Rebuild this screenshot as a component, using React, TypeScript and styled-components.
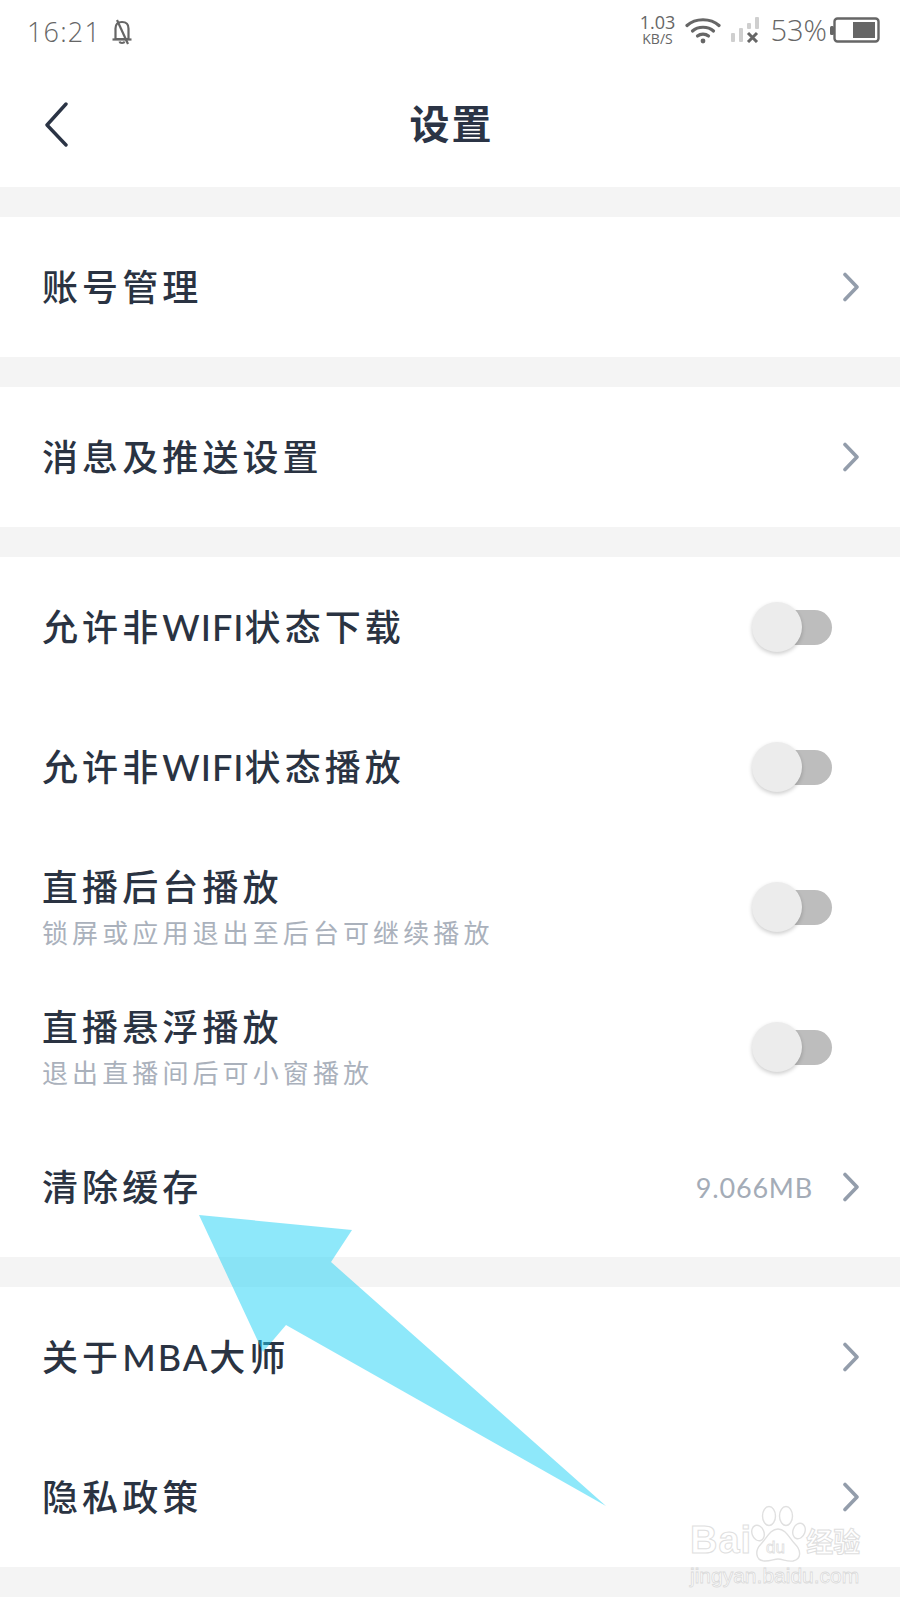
import React from "react";
import styled, { createGlobalStyle } from "styled-components";

const Global = createGlobalStyle`
  html, body { margin: 0; padding: 0; background: #fff; }
  body { font-family: "Lato", "Noto Sans CJK SC", sans-serif; }
`;

const CJK = `"Lato", "Noto Sans CJK SC", sans-serif`;

const Screen = styled.div`
  position: relative;
  width: 900px;
  height: 1600px;
  overflow: hidden;
  background: #fff;
`;

const StatusBar = styled.div`
  height: 64px;
  display: flex;
  align-items: flex-start;
  justify-content: space-between;
  padding: 14px 20px 0 27px;
  box-sizing: border-box;
  color: #777;
`;
const StatusLeft = styled.div`
  display: flex;
  align-items: center;
  gap: 10px;
  height: 36px;
`;
const Clock = styled.span`
  font-family: "Open Sans", sans-serif;
  font-size: 27px;
  font-weight: 300;
  letter-spacing: 1.2px;
  line-height: 36px;
  color: #666;
`;
const StatusRight = styled.div`
  display: flex;
  align-items: center;
  height: 32px;
`;
const Speed = styled.div`
  display: flex;
  flex-direction: column;
  align-items: center;
  width: 40px;
  margin-right: 8px;
  font-family: "Open Sans", sans-serif;
  color: #666;
`;
const SpeedValue = styled.span`
  font-size: 18px;
  line-height: 18px;
`;
const SpeedUnit = styled.span`
  font-size: 14px;
  line-height: 16px;
`;
const SignalGap = styled.span`
  width: 10px;
`;
const Percent = styled.span`
  font-family: "Open Sans", sans-serif;
  font-size: 29px;
  font-weight: 300;
  color: #666;
  margin: 0 3px 0 11px;
  line-height: 32px;
`;

const Header = styled.div`
  height: 123px;
  box-sizing: border-box;
  padding: 0 0 8px 3px;
  display: flex;
  align-items: center;
  justify-content: center;
  position: relative;
`;
const BackIcon = styled.svg`
  position: absolute;
  left: 42px;
  top: 37px;
`;
const Title = styled.h1`
  margin: 0;
  font-family: ${CJK};
  font-size: 40px;
  font-weight: 700;
  letter-spacing: 2px;
  color: #2b3445;
`;

const Band = styled.div`
  height: 30px;
  background: #f4f4f4;
`;

const Row = styled.div`
  height: 140px;
  display: flex;
  align-items: center;
  justify-content: space-between;
  padding: 0 41px 0 42px;
  box-sizing: border-box;
`;
const Texts = styled.div`
  display: flex;
  flex-direction: column;
`;
const Label = styled.div`
  font-family: ${CJK};
  font-size: 36px;
  font-weight: 500;
  line-height: 46px;
  letter-spacing: 4.1px;
  color: #2a3342;
`;
const Latin = styled.span<{ $spacing: number }>`
  letter-spacing: ${(p) => p.$spacing}px;
`;
const Sub = styled.div`
  font-family: ${CJK};
  font-size: 26px;
  line-height: 34px;
  letter-spacing: 4.1px;
  color: #aab1bc;
  margin-top: 6px;
`;
const Trailing = styled.div`
  display: flex;
  align-items: center;
  gap: 30px;
`;
const Value = styled.span`
  font-family: "Lato", sans-serif;
  font-size: 27px;
  letter-spacing: 0.8px;
  color: #a4acb7;
`;
const Track = styled.div`
  position: relative;
  width: 68px;
  height: 35px;
  border-radius: 18px;
  background: #bdbdbd;
  margin-right: 27px;
`;
const Knob = styled.div`
  position: absolute;
  left: -12px;
  top: -8px;
  width: 50px;
  height: 50px;
  border-radius: 50%;
  background: #ececec;
  box-shadow: 0 2px 4px rgba(0, 0, 0, 0.2);
`;

const ArrowOverlay = styled.svg`
  position: absolute;
  left: 0;
  top: 0;
  pointer-events: none;
`;

const Watermark = styled.div`
  position: absolute;
  left: 690px;
  top: 1506px;
  width: 180px;
  pointer-events: none;
`;
const MarkTop = styled.div`
  display: flex;
  align-items: flex-end;
  height: 56px;
  white-space: nowrap;
`;
const MarkBai = styled.span`
  font-family: "Liberation Sans", sans-serif;
  font-size: 38px;
  line-height: 44px;
  font-weight: 700;
  color: #fff;
  -webkit-text-stroke: 1px #e0e0e0;
  letter-spacing: 1px;
`;
const MarkPaw = styled.svg`
  flex: none;
  margin: -6px 0 -2px -2px;
`;
const MarkCn = styled.span`
  font-family: "Noto Sans CJK SC", sans-serif;
  font-size: 27px;
  line-height: 42px;
  font-weight: 700;
  color: #fff;
  -webkit-text-stroke: 1px #dedede;
  margin-left: 0;
  flex: none;
`;
const MarkUrl = styled.div`
  font-family: "Liberation Sans", sans-serif;
  font-size: 21px;
  line-height: 24px;
  color: #fff;
  -webkit-text-stroke: 0.8px #dadada;
  margin-top: 2px;
  white-space: nowrap;
`;

const Chevron = () => (
  <svg width="16" height="32" viewBox="0 0 16 32" fill="none">
    <path d="M2 3.500 L14 16 L2 28.500" stroke="#939dab" strokeWidth="3.600" strokeLinecap="round" strokeLinejoin="round" />
  </svg>
);

const Toggle = () => (
  <Track>
    <Knob />
  </Track>
);

const BellOff = () => (
  <svg width="22" height="26" viewBox="0 0 22 26" fill="none" stroke="#666" strokeWidth="2.200" strokeLinejoin="round">
    <path d="M4.500 20 V9.500 C4.500 5.500 7 3 11 3 C15 3 17.500 5.500 17.500 9.500 V20 Z" />
    <path d="M1.500 20.500 H20.500" />
    <path d="M8.500 22.500 C9 24.500 13 24.500 13.500 22.500" />
    <path d="M6 1 L17 25" />
  </svg>
);

const Wifi = () => (
  <svg width="36" height="27" viewBox="0 0 36 27" fill="none" stroke="#666" strokeWidth="3.200" strokeLinecap="round">
    <path d="M2 8.500 C10.500 0.800 25.500 0.800 34 8.500" />
    <path d="M7.500 14 C13 9 23 9 28.500 14" />
    <path d="M12.500 19 C15.500 16.500 20.500 16.500 23.500 19" />
    <circle cx="18" cy="24" r="2.400" fill="#666" stroke="none" />
  </svg>
);

const Signal = () => (
  <svg width="28" height="26" viewBox="0 0 28 26">
    <rect x="0" y="16" width="4" height="9" rx="1" fill="#cfcfcf" />
    <rect x="8" y="11" width="4" height="14" rx="1" fill="#cfcfcf" />
    <rect x="16" y="6" width="4" height="6" rx="1" fill="#cfcfcf" />
    <rect x="24" y="0" width="4" height="12" rx="1" fill="#cfcfcf" />
    <path d="M17 16 L26 25 M26 16 L17 25" stroke="#666" strokeWidth="3" />
  </svg>
);

const Battery = () => (
  <svg width="50" height="26" viewBox="0 0 50 26">
    <rect x="0" y="9" width="4" height="9" rx="1.500" fill="#666" />
    <rect x="4.500" y="1.500" width="44" height="23" rx="3" fill="none" stroke="#666" strokeWidth="2.400" />
    <rect x="23" y="5" width="22" height="16" fill="#666" />
  </svg>
);

const BaiduPaw = () => (
  <MarkPaw width="56" height="60" viewBox="0 0 56 60" fill="#fff" stroke="#e0e0e0" strokeWidth="1.400">
    <ellipse cx="8" cy="29" rx="6" ry="8" transform="rotate(-20 8 29)" />
    <ellipse cx="19" cy="12" rx="6.500" ry="9.500" />
    <ellipse cx="36" cy="12" rx="6.500" ry="9.500" />
    <ellipse cx="49" cy="27" rx="6" ry="8" transform="rotate(20 49 27)" />
    <path d="M28 25 C20 25 17 34 11 40 C5 46 5 56 14 57 C20 57.500 24 55 28 55 C33 55 37 58 43 57 C52 55 51 46 45 40 C39 34 36 25 28 25 Z" />
    <text x="16" y="49" fontFamily="Liberation Sans, sans-serif" fontSize="17" fill="#fff" stroke="#e0e0e0" strokeWidth="0.800">du</text>
  </MarkPaw>
);

export default function App() {
  return (
    <Screen>
      <Global />
      <StatusBar>
        <StatusLeft>
          <Clock>16:21</Clock>
          <BellOff />
        </StatusLeft>
        <StatusRight>
          <Speed>
            <SpeedValue>1.03</SpeedValue>
            <SpeedUnit>KB/S</SpeedUnit>
          </Speed>
          <Wifi />
          <SignalGap />
          <Signal />
          <Percent>53%</Percent>
          <Battery />
        </StatusRight>
      </StatusBar>
      <Header>
        <BackIcon width="28" height="46" viewBox="0 0 28 46" fill="none">
          <path d="M24 3 L5 24 L24 44" stroke="#2b3445" strokeWidth="3.400" strokeLinecap="round" strokeLinejoin="round" />
        </BackIcon>
        <Title>设置</Title>
      </Header>
      <Band />
      <Row>
        <Label>账号管理</Label>
        <Chevron />
      </Row>
      <Band />
      <Row>
        <Label>消息及推送设置</Label>
        <Chevron />
      </Row>
      <Band />
      <Row>
        <Label>允许非<Latin $spacing={1}>WIFI</Latin>状态下载</Label>
        <Toggle />
      </Row>
      <Row>
        <Label>允许非<Latin $spacing={1}>WIFI</Latin>状态播放</Label>
        <Toggle />
      </Row>
      <Row>
        <Texts>
          <Label>直播后台播放</Label>
          <Sub>锁屏或应用退出至后台可继续播放</Sub>
        </Texts>
        <Toggle />
      </Row>
      <Row>
        <Texts>
          <Label>直播悬浮播放</Label>
          <Sub>退出直播间后可小窗播放</Sub>
        </Texts>
        <Toggle />
      </Row>
      <Row>
        <Label>清除缓存</Label>
        <Trailing>
          <Value>9.066MB</Value>
          <Chevron />
        </Trailing>
      </Row>
      <Band />
      <Row>
        <Label>关于<Latin $spacing={2}>MBA</Latin>大师</Label>
        <Chevron />
      </Row>
      <Row>
        <Label>隐私政策</Label>
        <Chevron />
      </Row>
      <Band />
      <ArrowOverlay width="900" height="1600" viewBox="0 0 900 1600">
        <polygon points="199,1215 352,1230 331,1262 606,1506 286,1325 263,1352" fill="rgba(30,210,245,0.5)" />
      </ArrowOverlay>
      <Watermark>
        <MarkTop>
          <MarkBai>Bai</MarkBai>
          <BaiduPaw />
          <MarkCn>经验</MarkCn>
        </MarkTop>
        <MarkUrl>jingyan.baidu.com</MarkUrl>
      </Watermark>
    </Screen>
  );
}
